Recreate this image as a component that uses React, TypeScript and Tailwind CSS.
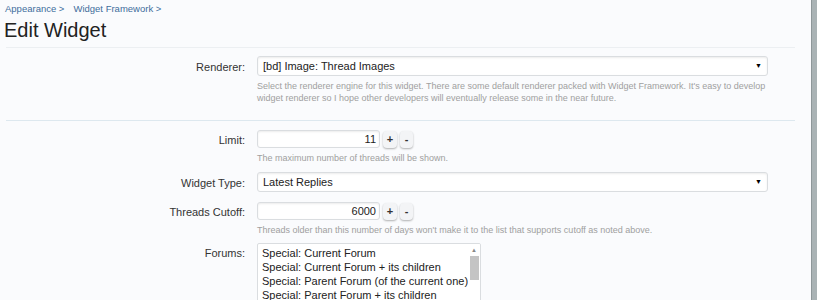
const font = { fontFamily: '"Liberation Sans", Arial, sans-serif' };

const Select = ({ value }: { value: string }) => (
  <div className="flex items-center justify-between h-[20px] w-[511px] bg-white border border-[#dadde0] rounded-[3px] shadow-[inset_0_1px_2px_rgba(0,0,0,0.08)] pl-[5px] pr-[5px] text-[11px] text-[#222]">
    <span>{value}</span>
    <span className="text-[7px] text-black">▼</span>
  </div>
);

const NumberInput = ({ value }: { value: string }) => (
  <div className="flex items-center gap-[3px]">
    <div className="flex items-center justify-end h-[18px] w-[123px] bg-white border border-[#dadde0] rounded-[3px] shadow-[inset_0_1px_2px_rgba(0,0,0,0.08)] pr-[3px] text-[11px] text-[#222]">
      {value}
    </div>
    <div className="flex items-center justify-center h-[17px] w-[14px] rounded-[4px] bg-[#f3f4f6] shadow-[0_1px_2px_rgba(0,0,0,0.3)] text-[11px] font-bold text-[#333]">+</div>
    <div className="flex items-center justify-center h-[17px] w-[13px] rounded-[4px] bg-[#f3f4f6] shadow-[0_1px_2px_rgba(0,0,0,0.3)] text-[11px] font-bold text-[#333]">-</div>
  </div>
);

const Row = ({ label, children, top = 'pt-[3px]' }: { label: string; children: React.ReactNode; top?: string }) => (
  <div className="flex">
    <div className={`w-[245px] text-right text-[11px] text-[#333] ${top}`}>{label}</div>
    <div className="ml-[12px]">{children}</div>
  </div>
);

const Help = ({ children }: { children: React.ReactNode }) => (
  <p className="mt-[4px] w-[511px] text-[9px] leading-[12px] text-[#a0a0a0]">{children}</p>
);

const forums = [
  'Special: Current Forum',
  'Special: Current Forum + its children',
  'Special: Parent Forum (of the current one)',
  'Special: Parent Forum + its children',
];

export default function App() {
  return (
    <div className="flex w-[817px] h-[300px] overflow-hidden bg-[#fafbfd]" style={font}>
      <div className="flex-1">
        <div className="pl-[5px] pt-[3px] text-[9.5px] leading-[12px] text-[#3e6d9c]">
          <span>Appearance &gt;</span>
          <span className="ml-[9px]">Widget Framework &gt;</span>
        </div>
        <h1 className="pl-[4px] mt-[3px] text-[20px] leading-[24px] text-[#222]">Edit Widget</h1>
        <div className="ml-[6px] mr-[16px] mt-[5px] border-b border-[#eceff2]" />

        <div className="mt-[8px]">
          <Row label="Renderer:">
            <Select value="[bd] Image: Thread Images" />
            <Help>
              Select the renderer engine for this widget. There are some default renderer packed with Widget Framework. It's easy to develop widget renderer so I hope other developers will eventually release some in the near future.
            </Help>
          </Row>
        </div>

        <div className="ml-[6px] mr-[16px] mt-[16px] border-b border-[#dde8ef]" />

        <div className="mt-[9px] flex flex-col">
          <Row label="Limit:" top="pt-[2px]">
            <NumberInput value="11" />
            <Help>The maximum number of threads will be shown.</Help>
          </Row>
          <div className="mt-[8px]">
            <Row label="Widget Type:">
              <Select value="Latest Replies" />
            </Row>
          </div>
          <div className="mt-[10px]">
            <Row label="Threads Cutoff:" top="pt-[2px]">
              <NumberInput value="6000" />
              <Help>Threads older than this number of days won't make it to the list that supports cutoff as noted above.</Help>
            </Row>
          </div>
          <div className="mt-[7px]">
            <Row label="Forums:" top="pt-[2px]">
              <div className="flex w-[224px] h-[80px] bg-white border border-[#dadde0] rounded-[2px] overflow-hidden">
                <div className="flex-1 pl-[4px] pt-[2px] text-[11px] leading-[14px] text-[#222]">
                  {forums.map((f) => (
                    <div key={f} className="whitespace-nowrap">{f}</div>
                  ))}
                </div>
                <div className="w-[12px] flex flex-col items-center pt-[2px] bg-white">
                  <span className="text-[6px] leading-[8px] text-[#888]">▲</span>
                  <div className="mt-[2px] w-[9px] h-[24px] bg-[#c4c4c4]" />
                </div>
              </div>
            </Row>
          </div>
        </div>
      </div>
      <div className="w-[6px] h-full bg-[#aab3b5] border-l border-[#8e9799]" />
    </div>
  );
}
